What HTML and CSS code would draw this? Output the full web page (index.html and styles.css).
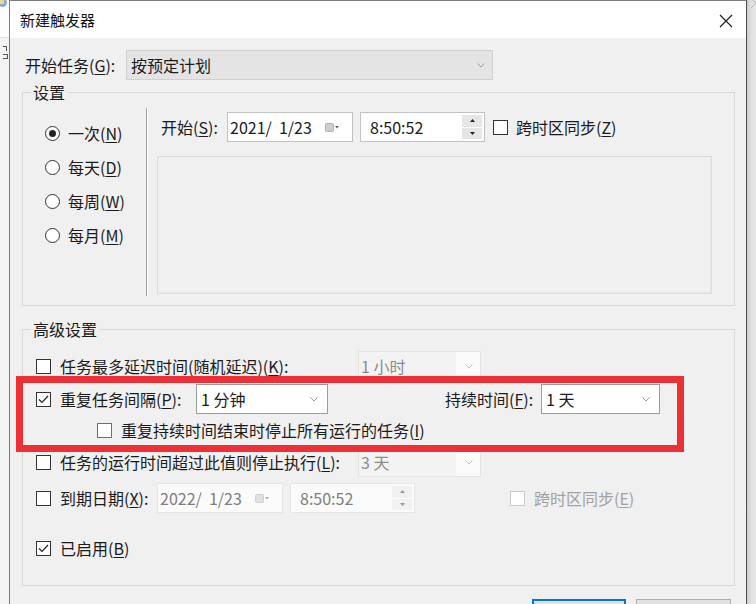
FILE: index.html
```html
<!DOCTYPE html>
<html lang="zh-CN">
<head>
<meta charset="utf-8">
<title>新建触发器</title>
<link rel="stylesheet" href="styles.css">
</head>
<body>
<div class="strip-left">
  <div class="strip-top"><span class="app-dot"></span></div>
  <div class="strip-mark"><span class="mark-a"></span><span class="mark-b"></span></div>
</div>

<div class="dialog">
  <div class="titlebar">
    <span class="title">新建触发器</span>
    <svg class="close" viewBox="0 0 14 14" width="14" height="14"><path d="M1 1 L13 13 M13 1 L1 13" stroke="#1a1a1a" stroke-width="1.1" fill="none"/></svg>
  </div>

  <div class="content">
    <div class="row-begin">
      <span class="lbl-begin">开始任务(<u>G</u>):</span>
      <div class="combo combo-grey combo-begin">
        <span class="combo-text">按预定计划</span>
        <svg class="chev" viewBox="0 0 8 5" width="8" height="5"><polyline points="0.5,0.5 4,4 7.5,0.5" stroke="#9a9a9a" fill="none"/></svg>
      </div>
    </div>

    <fieldset class="group group-settings">
      <legend>设置</legend>
      <div class="settings">
        <div class="radios">
          <div class="radio-row"><span class="radio on"></span><span>一次(<u>N</u>)</span></div>
          <div class="radio-row"><span class="radio"></span><span>每天(<u>D</u>)</span></div>
          <div class="radio-row"><span class="radio"></span><span>每周(<u>W</u>)</span></div>
          <div class="radio-row"><span class="radio"></span><span>每月(<u>M</u>)</span></div>
        </div>
        <div class="sep"></div>
        <div class="schedule">
          <div class="start-row">
            <span class="lbl-start">开始(<u>S</u>):</span>
            <div class="field date">
              <span class="field-text">2021/&nbsp; 1/23</span>
              <svg class="cal" viewBox="0 0 14 9" width="14" height="9"><rect x="0.5" y="0.5" width="8" height="8" rx="1" fill="#cdcdcd" stroke="#b0b0b0"/><polygon points="10,3 14,3 12,5.5" fill="#666"/></svg>
            </div>
            <div class="field time">
              <span class="field-text">8:50:52</span>
              <div class="spin">
                <span class="spin-btn"><svg viewBox="0 0 5 3" width="5" height="3"><polygon points="0,3 5,3 2.5,0" fill="#222"/></svg></span>
                <span class="spin-btn"><svg viewBox="0 0 5 3" width="5" height="3"><polygon points="0,0 5,0 2.5,3" fill="#222"/></svg></span>
              </div>
            </div>
            <span class="check check-start"></span>
            <span>跨时区同步(<u>Z</u>)</span>
          </div>
          <div class="detail-box"></div>
        </div>
      </div>
    </fieldset>

    <fieldset class="group group-advanced">
      <legend>高级设置</legend>

      <div class="adv-row r1">
        <span class="check"></span>
        <span class="lbl lbl-long">任务最多延迟时间(随机延迟)(<u>K</u>):</span>
        <div class="combo combo-dis combo-small">
          <span class="combo-text">1 小时</span>
          <svg class="chev" viewBox="0 0 8 5" width="8" height="5"><polyline points="0.5,0.5 4,4 7.5,0.5" stroke="#c4c4c4" fill="none"/></svg>
        </div>
      </div>

      <div class="adv-row r2">
        <span class="check"><svg viewBox="0 0 13 13" width="13" height="13"><polyline points="2,6.5 5,9.5 11,3" stroke="#222" stroke-width="1.2" fill="none"/></svg></span>
        <span class="lbl lbl-repeat">重复任务间隔(<u>P</u>):</span>
        <div class="combo combo-repeat">
          <span class="combo-text">1 分钟</span>
          <svg class="chev" viewBox="0 0 8 5" width="8" height="5"><polyline points="0.5,0.5 4,4 7.5,0.5" stroke="#9a9a9a" fill="none"/></svg>
        </div>
        <span class="lbl lbl-duration">持续时间(<u>F</u>):</span>
        <div class="combo combo-duration">
          <span class="combo-text">1 天</span>
          <svg class="chev" viewBox="0 0 8 5" width="8" height="5"><polyline points="0.5,0.5 4,4 7.5,0.5" stroke="#9a9a9a" fill="none"/></svg>
        </div>
      </div>

      <div class="adv-row r3">
        <span class="check check-hover"></span>
        <span>重复持续时间结束时停止所有运行的任务(<u>I</u>)</span>
      </div>

      <div class="adv-row r4">
        <span class="check"></span>
        <span class="lbl lbl-long">任务的运行时间超过此值则停止执行(<u>L</u>):</span>
        <div class="combo combo-dis combo-small">
          <span class="combo-text">3 天</span>
          <svg class="chev" viewBox="0 0 8 5" width="8" height="5"><polyline points="0.5,0.5 4,4 7.5,0.5" stroke="#c4c4c4" fill="none"/></svg>
        </div>
      </div>

      <div class="adv-row r5">
        <span class="check"></span>
        <span class="lbl lbl-expire">到期日期(<u>X</u>):</span>
        <div class="field field-dis date date-dis">
          <span class="field-text">2022/&nbsp; 1/23</span>
          <svg class="cal" viewBox="0 0 14 9" width="14" height="9"><rect x="0.5" y="0.5" width="8" height="8" rx="1" fill="#e2e2e2" stroke="#cfcfcf"/><polygon points="10,3 14,3 12,5.5" fill="#aaa"/></svg>
        </div>
        <div class="field field-dis time time-dis">
          <span class="field-text">8:50:52</span>
          <div class="spin spin-dis">
            <span class="spin-btn"><svg viewBox="0 0 5 3" width="5" height="3"><polygon points="0,3 5,3 2.5,0" fill="#999"/></svg></span>
            <span class="spin-btn"><svg viewBox="0 0 5 3" width="5" height="3"><polygon points="0,0 5,0 2.5,3" fill="#999"/></svg></span>
          </div>
        </div>
        <span class="check check-dis"></span>
        <span class="dis-text">跨时区同步(<u>E</u>)</span>
      </div>

      <div class="adv-row r6">
        <span class="check"><svg viewBox="0 0 13 13" width="13" height="13"><polyline points="2,6.5 5,9.5 11,3" stroke="#222" stroke-width="1.2" fill="none"/></svg></span>
        <span>已启用(<u>B</u>)</span>
      </div>
    </fieldset>

    <div class="buttons">
      <div class="btn btn-primary"></div>
      <div class="btn"></div>
    </div>
  </div>
</div>

<div class="strip-right">
  <svg class="ghost-x" viewBox="0 0 10 10" width="10" height="10"><path d="M2 -2 L12 8 M12 -2 L2 8" stroke="#b8b8b8" stroke-width="1" fill="none"/></svg>
</div>

<div class="annotation"></div>
</body>
</html>
```

FILE: styles.css
```css
* {
  box-sizing: border-box;
}

html,
body {
  margin: 0;
  padding: 0;
}

body {
  width: 756px;
  height: 604px;
  overflow: hidden;
  position: relative;
  display: flex;
  font-family: "Noto Sans CJK SC", "Noto Sans", sans-serif;
  font-size: 16px;
  line-height: 20px;
  color: #1b1b1b;
  background: #ececec;
}

u {
  text-underline-offset: 2px;
  text-decoration-thickness: 1px;
}

/* background window strips */
.strip-left {
  width: 9px;
  flex: none;
  overflow: hidden;
  background: #f4f4f4;
  display: flex;
  flex-direction: column;
}

.strip-top {
  height: 38px;
  background: #fdfdfd;
  border-bottom: 1px solid #e2e2e2;
}

.app-dot {
  display: block;
  width: 9px;
  height: 9px;
  margin: -2px 0 0 -2px;
  border-radius: 50%;
  background: radial-gradient(circle at 40% 40%, #e9d79a 0 35%, #8ea8c8 36% 100%);
}

.strip-mark {
  margin: 8px 0 0 3px;
  display: flex;
  flex-direction: column;
  gap: 3px;
}

.mark-a {
  width: 4px;
  height: 5px;
  border-top: 1px solid #555;
  border-right: 1px solid #555;
}

.mark-b {
  width: 5px;
  height: 5px;
  border: 1px solid #555;
  border-left: none;
}

.strip-right {
  flex: 1;
  background: linear-gradient(to right, #c9c9c9 0, #dedede 3px, #e8e8e8 100%);
  overflow: hidden;
}

.ghost-x {
  display: block;
  margin-left: 2px;
}

/* dialog */
.dialog {
  width: 738px;
  flex: none;
  display: flex;
  flex-direction: column;
  border: 1px solid #7d7d7d;
  border-right-color: #505050;
  border-bottom: none;
  background: #f0f0f0;
}

.titlebar {
  height: 37px;
  flex: none;
  background: #ffffff;
  display: flex;
  align-items: center;
  padding: 0 13px 0 10px;
}

.title {
  flex: 1;
  font-size: 15px;
  line-height: 20px;
  color: #111;
}

.close {
  display: block;
  margin-top: 2px;
}

.content {
  flex: 1;
  display: flex;
  flex-direction: column;
}

/* first row */
.row-begin {
  display: flex;
  align-items: center;
  height: 30px;
  margin: 12px 0 0 15px;
}

.lbl-begin {
  width: 101px;
  flex: none;
}

.combo {
  height: 30px;
  flex: none;
  display: flex;
  align-items: center;
  border: 1px solid #9c9c9c;
  background: #ffffff;
  padding: 0 7px 0 4px;
}

.combo-text {
  flex: 1;
  white-space: nowrap;
}

.chev {
  display: block;
  flex: none;
}

.combo-grey {
  background: #e4e4e4;
  border-color: #d0d0d0;
}

.combo-begin {
  width: 367px;
}

.combo-dis {
  background: linear-gradient(to right, #f3f3f3 calc(100% - 24px), #fbfbfb calc(100% - 24px));
  border-color: #e4e4e4;
  color: #8c8c8c;
  padding-left: 2px;
}

.combo-small {
  width: 123px;
}

.combo-repeat {
  width: 132px;
  padding-right: 9px;
}

.combo-duration {
  width: 119px;
  padding-right: 9px;
}

/* group boxes */
.group {
  margin: 0 0 0 12px;
  width: 713px;
  padding: 0;
  border: 1px solid #d9d9d9;
  min-inline-size: 0;
}

.group legend {
  margin-left: 8px;
  padding: 0 2px;
  line-height: 20px;
  font-size: 16px;
}

.group-settings {
  margin-top: 2px;
  padding-bottom: 9px;
}

.settings {
  display: flex;
  padding-top: 6px;
}

.radios {
  width: 123px;
  flex: none;
  padding: 8px 0 0 22px;
  display: flex;
  flex-direction: column;
}

.radio-row {
  height: 34px;
  display: flex;
  align-items: center;
  gap: 8px;
}

.radio {
  width: 15px;
  height: 15px;
  flex: none;
  border: 1px solid #333;
  border-radius: 50%;
  background: #ffffff;
  display: flex;
  align-items: center;
  justify-content: center;
}

.radio.on::after {
  content: "";
  width: 7px;
  height: 7px;
  border-radius: 50%;
  background: #222;
}

.sep {
  width: 2px;
  height: 188px;
  flex: none;
  border-left: 1px solid #a3a3a3;
  border-right: 1px solid #ffffff;
}

.schedule {
  padding-left: 9px;
  display: flex;
  flex-direction: column;
}

.start-row {
  display: flex;
  align-items: center;
  height: 30px;
  margin: 4px 0 0 4px;
}

.lbl-start {
  width: 66px;
  flex: none;
}

.field {
  height: 30px;
  flex: none;
  display: flex;
  align-items: center;
  border: 1px solid #c2c2c2;
  background: #ffffff;
}

.field-text {
  flex: 1;
  white-space: nowrap;
}

.date {
  width: 126px;
  padding: 0 13px 0 2px;
}

.cal {
  display: block;
  flex: none;
}

.time {
  width: 125px;
  margin-left: 7px;
  padding: 0 2px 0 9px;
}

.spin {
  width: 20px;
  height: 24px;
  display: flex;
  flex-direction: column;
  gap: 1px;
}

.spin-btn {
  flex: 1;
  background: #e6e6e6;
  display: flex;
  align-items: center;
  justify-content: center;
}

.spin-btn svg {
  display: block;
}

.spin-dis .spin-btn {
  background: #f1f1f1;
}

.check {
  width: 15px;
  height: 15px;
  flex: none;
  border: 1px solid #333;
  background: #ffffff;
  margin-right: 9px;
  display: flex;
  align-items: center;
  justify-content: center;
}

.check svg {
  display: block;
}

.check-start {
  margin-left: 8px;
  margin-right: 8px;
}

.check-hover {
  border-color: #2a7fd4;
}

.check-dis {
  border-color: #cacaca;
  margin-left: 95px;
}

.detail-box {
  margin-top: 14px;
  width: 555px;
  height: 138px;
  border: 1px solid #dddddd;
  box-shadow: inset -1px -1px 0 #e8e8e8;
}

/* advanced */
.group-advanced {
  margin-top: 13px;
  padding-bottom: 22px;
}

.adv-row {
  display: flex;
  align-items: center;
  height: 30px;
  padding-left: 13px;
  white-space: nowrap;
}

.r1 { margin-top: 12px; }
.r2 { margin-top: 3px; }
.r3 { margin-top: 1px; padding-left: 74px; }
.r4 { margin-top: 2px; }
.r5 { margin-top: 6px; }
.r6 { margin-top: 20px; }

.lbl {
  flex: none;
}

.lbl-long {
  width: 298px;
}

.lbl-repeat {
  width: 136px;
}

.lbl-duration {
  width: 96px;
  margin-left: 117px;
}

.lbl-expire {
  width: 97px;
}

.field-dis {
  background: #fbfbfb;
  border-color: #e6e6e6;
  color: #7e7e7e;
}

.date-dis {
  padding-left: 2px;
}

.time-dis {
  padding-left: 9px;
}

.dis-text {
  color: #a2a2a2;
}

/* buttons */
.buttons {
  display: flex;
  justify-content: flex-end;
  gap: 10px;
  margin-top: 13px;
  padding-right: 15px;
}

.btn {
  width: 95px;
  height: 30px;
  border: 1px solid #adadad;
  background: #e1e1e1;
}

.btn-primary {
  width: 94px;
  border: 2px solid #0078d7;
}

/* red annotation drawn over the dialog */
.annotation {
  position: absolute;
  left: 16px;
  top: 376px;
  width: 668px;
  height: 76px;
  border: 7px solid #ec3036;
  pointer-events: none;
}
```
